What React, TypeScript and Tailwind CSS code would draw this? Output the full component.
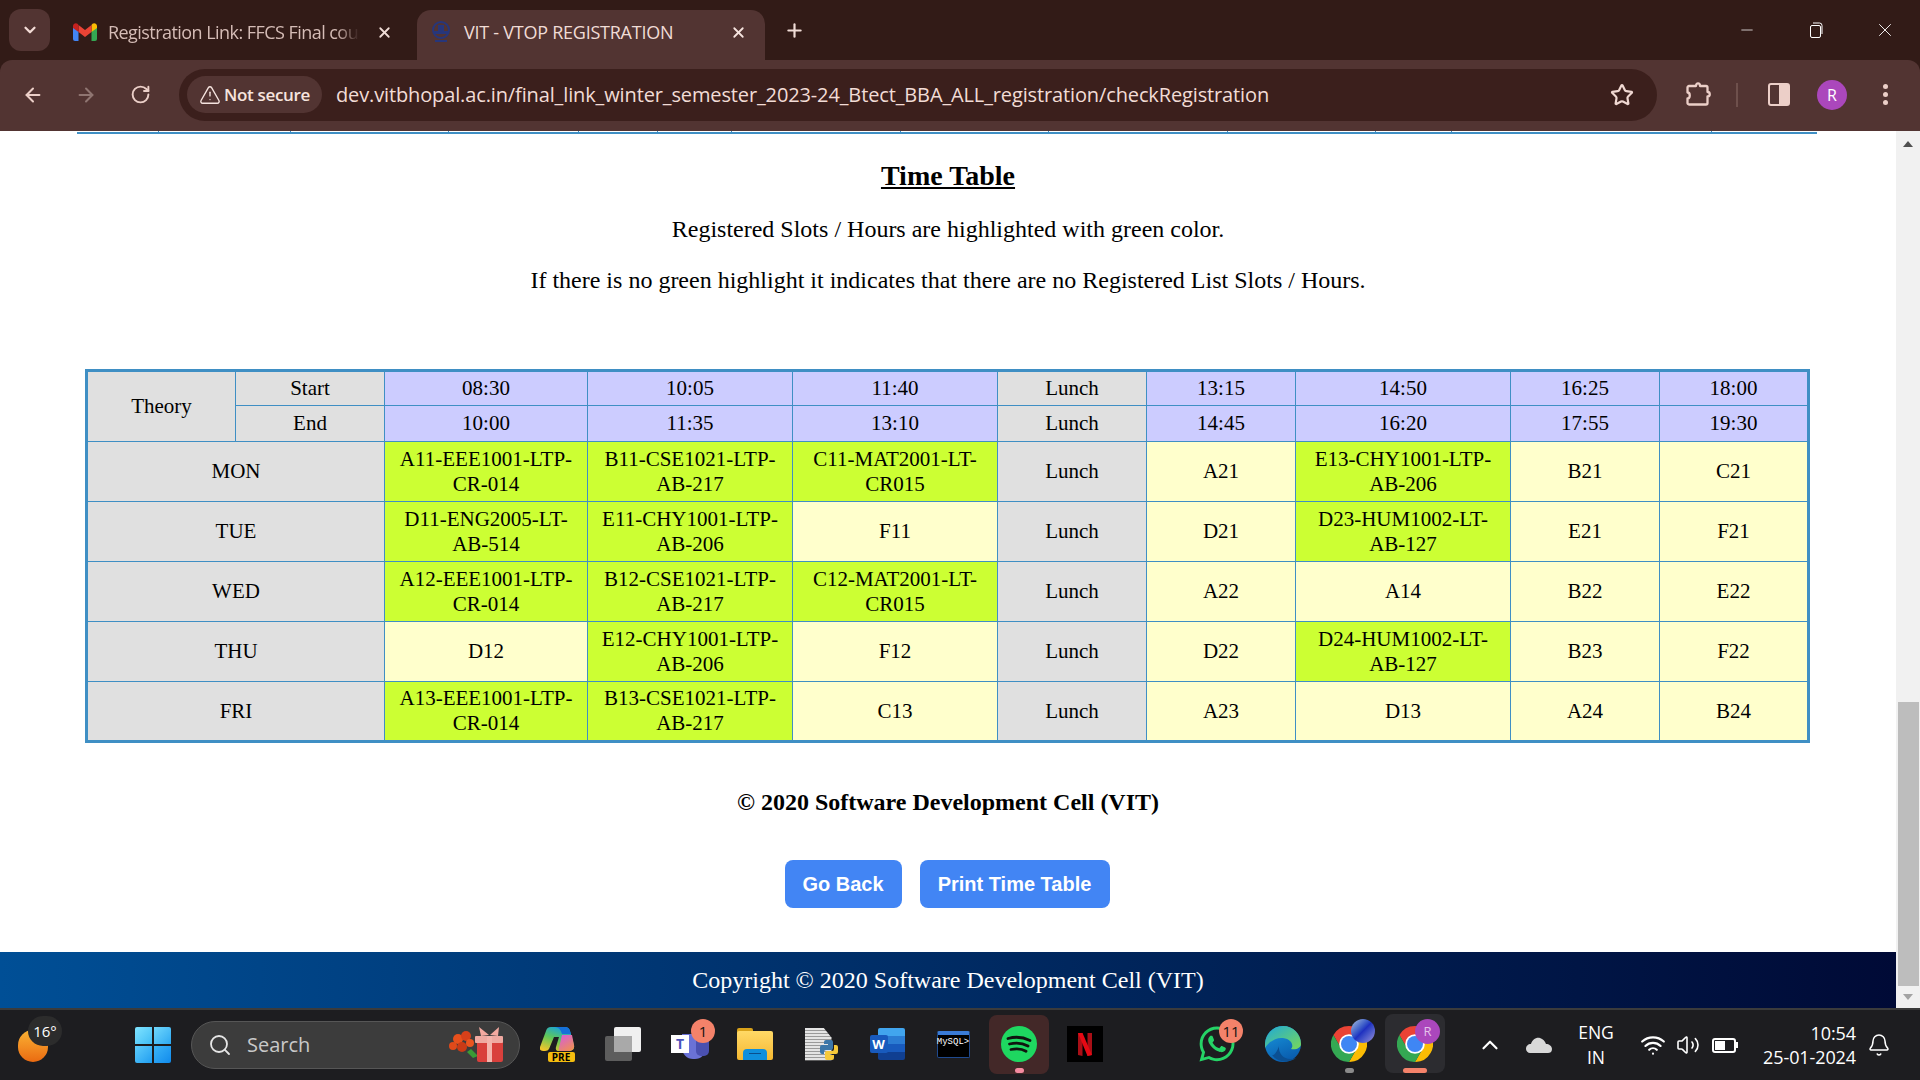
import React from "react";
import { FaWhatsapp } from "react-icons/fa";
import { ArrowLeft, ArrowRight, RotateCw, Star, X, Plus, ChevronDown, ChevronUp, TriangleAlert, Search, Wifi, Volume2, Bell, Minus } from "lucide-react";

const serif = "font-['Liberation_Serif',serif]";
const ui = "font-['Open_Sans',sans-serif]";

type Cell = { t: string; c: "g" | "y" | "l" };
const g = (t: string): Cell => ({ t, c: "g" });
const y = (t: string): Cell => ({ t, c: "y" });
const L: Cell = { t: "Lunch", c: "l" };

const rows: { d: string; cells: Cell[] }[] = [
  { d: "MON", cells: [g("A11-EEE1001-LTP-CR-014"), g("B11-CSE1021-LTP-AB-217"), g("C11-MAT2001-LT-CR015"), L, y("A21"), g("E13-CHY1001-LTP-AB-206"), y("B21"), y("C21")] },
  { d: "TUE", cells: [g("D11-ENG2005-LT-AB-514"), g("E11-CHY1001-LTP-AB-206"), y("F11"), L, y("D21"), g("D23-HUM1002-LT-AB-127"), y("E21"), y("F21")] },
  { d: "WED", cells: [g("A12-EEE1001-LTP-CR-014"), g("B12-CSE1021-LTP-AB-217"), g("C12-MAT2001-LT-CR015"), L, y("A22"), y("A14"), y("B22"), y("E22")] },
  { d: "THU", cells: [y("D12"), g("E12-CHY1001-LTP-AB-206"), y("F12"), L, y("D22"), g("D24-HUM1002-LT-AB-127"), y("B23"), y("F22")] },
  { d: "FRI", cells: [g("A13-EEE1001-LTP-CR-014"), g("B13-CSE1021-LTP-AB-217"), y("C13"), L, y("A23"), y("D13"), y("A24"), y("B24")] },
];
const starts = ["08:30", "10:05", "11:40", "Lunch", "13:15", "14:50", "16:25", "18:00"];
const ends = ["10:00", "11:35", "13:10", "Lunch", "14:45", "16:20", "17:55", "19:30"];
const td = "border border-[#3f8fc4] text-center align-middle px-[5px] py-0 leading-[25px] text-[21px]";
const bg = { g: "bg-[#ccff33]", y: "bg-[#ffffcc]", l: "bg-[#e0e0e0]" };

function Gmail() {
  return (
    <svg width="24" height="18" viewBox="0 0 24 18">
      <path d="M0 4v12a2 2 0 0 0 2 2h3.500V8z" fill="#4285f4" />
      <path d="M24 4v12a2 2 0 0 1-2 2h-3.500V8z" fill="#34a853" />
      <path d="M18.500 2v7L24 5V3c0-2.500-2.800-3.600-4.500-2.300z" fill="#fbbc04" />
      <path d="M5.500 9V2L12 7l6.500-5v7L12 14z" fill="#ea4335" />
      <path d="M0 3v2l5.500 4V2L4.500 .7C2.800-.6 0 .5 0 3z" fill="#c5221f" />
    </svg>
  );
}

const wedge = "M18 0a18 18 0 0 1 15.600 9H18a9 9 0 0 0-7.800 13.500L2.400 9A18 18 0 0 1 18 0z";
function ChromeLogo() {
  return (
    <svg width="36" height="36" viewBox="0 0 36 36">
      <path d={wedge} fill="#ea4335" />
      <path d={wedge} fill="#fbbc04" transform="rotate(120 18 18)" />
      <path d={wedge} fill="#34a853" transform="rotate(240 18 18)" />
      <circle cx="18" cy="18" r="9.800" fill="#fff" />
      <circle cx="18" cy="18" r="8" fill="#3f86f4" />
    </svg>
  );
}

function Badge({ t }: { t: string }) {
  return <span className={`absolute left-[35px] top-[5px] w-[24px] h-[24px] flex items-center justify-center rounded-full bg-[#f4826a] text-[#111] text-[15px] ${ui}`}>{t}</span>;
}

function Slot({ children }: { children: React.ReactNode }) {
  return <div className="relative w-[66px] h-[60px] flex items-center justify-center">{children}</div>;
}

export default function App() {
  return (
    <div className="w-[1920px] h-[1080px] flex flex-col overflow-hidden bg-white">
      {/* Tab strip */}
      <div className={`h-[60px] shrink-0 bg-[#321b17] flex items-start text-[#e8cfc9] ${ui}`}>
        <div className="ml-[9px] mt-[9px] w-[41px] h-[42px] rounded-[12px] bg-[#523432] flex items-center justify-center">
          <ChevronDown size={18} strokeWidth={3} color="#f3dcd6" />
        </div>
        <div className="w-[367px] h-[50px] mt-[10px] pb-[6px] flex items-center pl-[23px] relative">
          <Gmail />
          <span className="ml-[11px] w-[254px] whitespace-nowrap text-[18px] tracking-[-0.550px] text-[#d5bcb6] [mask-image:linear-gradient(90deg,#000_90%,transparent_99%)]">Registration Link: FFCS Final cou</span>
          <X size={17} strokeWidth={2.500} className="ml-[14px]" color="#f0dcd6" />
        </div>
        <div className="w-[348px] h-[50px] mt-[10px] pb-[6px] rounded-t-[14px] bg-[#523432] flex items-center pl-[14px]">
          <svg width="22" height="24" viewBox="0 0 22 24" className="ml-[-1px]">
            <circle cx="11" cy="10" r="8" fill="none" stroke="#27367a" strokeWidth="2" />
            <path d="M4 11h14v3H4zM8 5h6v6H8z" fill="#27367a" />
            <path d="M5 21h12" stroke="#27367a" strokeWidth="2" />
          </svg>
          <span className="ml-[12px] w-[266px] whitespace-nowrap text-[18px] tracking-[-0.250px] text-[#f0dcd6]">VIT - VTOP REGISTRATION</span>
          <X size={17} strokeWidth={2.500} color="#f6e4df" />
        </div>
        <Plus size={21} strokeWidth={2.500} color="#f0dcd6" className="ml-[19px] mt-[20px]" />
        <div className="flex-1" />
        <Minus size={18} strokeWidth={1} color="#fff" className="mt-[21px] mr-[53px]" />
        <svg width="14" height="16" viewBox="0 0 14 16" className="mt-[22px] mr-[51px]" fill="none" stroke="#fff" strokeWidth="1">
          <rect x="1.500" y="3.500" width="10" height="12" rx="1.500" />
          <path d="M4 1h6.500a2.500 2.500 0 0 1 2.500 2.500V12" />
        </svg>
        <X size={22} strokeWidth={1} color="#fff" className="mt-[19px] mr-[24px]" />
      </div>
      {/* Toolbar */}
      <div className={`h-[71px] shrink-0 bg-[#321b17] ${ui}`}>
        <div className="h-full pb-[2px] rounded-t-[12px] bg-[#523432] flex items-center text-[#f0d8d2]">
          <ArrowLeft size={22} strokeWidth={2.200} color="#eccfc8" className="ml-[22px]" />
          <ArrowRight size={22} strokeWidth={2.200} color="#8f7571" className="ml-[31px]" />
          <RotateCw size={21} strokeWidth={2.200} color="#eccfc8" className="ml-[33px]" />
          <div className="ml-[28px] w-[1478px] h-[52px] rounded-full bg-[#3b1f1c] flex items-center pl-[8px]">
            <div className="h-[37px] w-[135px] rounded-full bg-[#523432] flex items-center justify-center gap-[3px]">
              <TriangleAlert size={22} strokeWidth={1.500} color="#f6e4df" />
              <span className="text-[17px] font-semibold text-[#f6e4df] tracking-[-0.350px]">Not secure</span>
            </div>
            <span className="ml-[14px] text-[20px] tracking-[-0.130px] text-[#f2dcd6] whitespace-nowrap">dev.vitbhopal.ac.in/final_link_winter_semester_2023-24_Btect_BBA_ALL_registration/checkRegistration</span>
            <div className="flex-1" />
            <Star size={24} strokeWidth={2.200} color="#f0d8d2" className="mr-[23px]" />
          </div>
          <svg width="25" height="25" viewBox="0 0 25 25" fill="none" stroke="#eccfc8" strokeWidth="2.300" strokeLinejoin="round" className="ml-[29px]">
            <path d="M3 4h7c0-3.500 4-3.500 4 0h6a1.500 1.500 0 0 1 1.500 1.500V10c3 0 3 4.500 0 4.500V21a1.500 1.500 0 0 1-1.500 1.500H3A1.500 1.500 0 0 1 1.500 21v-4.500c3 0 3-6 0-6v-5A1.500 1.500 0 0 1 3 4z" />
          </svg>
          <div className="ml-[25px] w-[2px] h-[24px] bg-[#6e504c]" />
          <div className="ml-[30px] w-[22px] h-[23px] rounded-[3px] border-[2px] border-[#eccfc8] flex justify-end">
            <div className="w-[9px] h-full bg-[#eccfc8]" />
          </div>
          <div className="ml-[27px] w-[30px] h-[30px] rounded-full bg-[#ab47bc] flex items-center justify-center text-[16px] text-white">R</div>
          <div className="ml-[36px] flex flex-col gap-[3px]">
            <span className="w-[5px] h-[5px] rounded-full bg-[#eccfc8]" />
            <span className="w-[5px] h-[5px] rounded-full bg-[#eccfc8]" />
            <span className="w-[5px] h-[5px] rounded-full bg-[#eccfc8]" />
          </div>
        </div>
      </div>
      {/* Page */}
      <div className="h-[877px] shrink-0 flex">
        <div className={`w-[1896px] flex flex-col text-black ${serif}`}>
          <div className="mx-[77px] w-[1740px] h-[3px] border-b-[2px] border-[#3f8fc4] flex shrink-0">
            {[82, 132, 158, 130, 79, 74, 169, 148, 179, 148, 76, 260].map((w, i) => (
              <div key={i} className="h-full border-r border-[#3f8fc4]" style={{ width: w }} />
            ))}
          </div>
          <h1 className="mt-[25px] text-center text-[28px] leading-[34px] font-bold underline">Time Table</h1>
          <p className="mt-[23px] text-center text-[24px] leading-[26px]">Registered Slots / Hours are highlighted with green color.</p>
          <p className="mt-[25px] text-center text-[24px] leading-[26px]">If there is no green highlight it indicates that there are no Registered List Slots / Hours.</p>
          <table className="mt-[76px] ml-[85px] w-[1725px] table-fixed border-collapse border-[3px] border-[#3f8fc4] shrink-0">
            <colgroup>
              {[149, 149, 203, 205, 205, 149, 149, 215, 149, 149].map((w, i) => (
                <col key={i} style={{ width: w }} />
              ))}
            </colgroup>
            <tbody>
              <tr className="h-[35px]">
                <td rowSpan={2} className={`${td} bg-[#e0e0e0]`}>Theory</td>
                <td className={`${td} bg-[#e0e0e0]`}>Start</td>
                {starts.map((s, i) => (
                  <td key={i} className={`${td} ${s === "Lunch" ? "bg-[#e0e0e0]" : "bg-[#ccccff]"}`}>{s}</td>
                ))}
              </tr>
              <tr className="h-[36px]">
                <td className={`${td} bg-[#e0e0e0]`}>End</td>
                {ends.map((s, i) => (
                  <td key={i} className={`${td} ${s === "Lunch" ? "bg-[#e0e0e0]" : "bg-[#ccccff]"}`}>{s}</td>
                ))}
              </tr>
              {rows.map((r) => (
                <tr key={r.d} className="h-[60px]">
                  <td colSpan={2} className={`${td} bg-[#e0e0e0]`}>{r.d}</td>
                  {r.cells.map((c, i) => (
                    <td key={i} className={`${td} ${bg[c.c]}`}>{c.t}</td>
                  ))}
                </tr>
              ))}
            </tbody>
          </table>
          <p className="mt-[45px] text-center text-[24px] leading-[28px] font-bold">© 2020 Software Development Cell (VIT)</p>
          <div className="mt-[44px] mr-[2px] flex justify-center gap-[18px] font-['Liberation_Sans',sans-serif] text-[20px] font-bold text-white">
            <button className="w-[117px] h-[48px] rounded-[8px] bg-[#4285f4]">Go Back</button>
            <button className="w-[190px] h-[48px] rounded-[8px] bg-[#4285f4]">Print Time Table</button>
          </div>
          <div className="flex-1" />
          <div className="h-[56px] bg-gradient-to-r from-[#004f96] to-[#000a36] flex items-center justify-center text-white text-[24px]">Copyright © 2020 Software Development Cell (VIT)</div>
        </div>
        <div className="w-[24px] bg-[#f1f1f1] flex flex-col items-center">
          <div className="h-[26px] flex items-center justify-center">
            <div className="w-0 h-0 border-x-[5px] border-x-transparent border-b-[6px] border-b-[#505050]" />
          </div>
          <div className="h-[545px]" />
          <div className="w-[21px] h-[284px] bg-[#bdbdbd]" />
          <div className="flex-1 flex items-center justify-center">
            <div className="w-0 h-0 border-x-[5px] border-x-transparent border-t-[6px] border-t-[#a3a3a3]" />
          </div>
        </div>
      </div>
      {/* Taskbar */}
      <div className={`h-[72px] shrink-0 bg-[#1d1d20] border-t-[2px] border-[#3b3b3b] flex items-center text-white ${ui}`}>
        <div className="relative ml-[18px] w-[30px] h-[34px] mt-[4px]">
          <div className="w-[30px] h-[32px] rounded-full bg-gradient-to-b from-[#f9b233] to-[#ea6a10]" />
          <span className="absolute left-[10px] top-[-14px] w-[34px] h-[30px] rounded-full bg-[#2c2c2c] flex items-center justify-center text-[15px]">16°</span>
        </div>
        <div className="ml-[87px] grid grid-cols-2 gap-[2px] w-[36px] h-[36px]">
          <span className="bg-gradient-to-br from-[#7fe4ff] to-[#3dbcf5] rounded-tl-[2px]" />
          <span className="bg-gradient-to-br from-[#6fd8fc] to-[#2aa8f2] rounded-tr-[2px]" />
          <span className="bg-gradient-to-br from-[#5ccdfb] to-[#1d9df0] rounded-bl-[2px]" />
          <span className="bg-gradient-to-br from-[#3ab5f8] to-[#0f8aec] rounded-br-[2px]" />
        </div>
        <div className="ml-[20px] w-[329px] h-[48px] rounded-full bg-[#3c3c3c] border border-[#565656] flex items-center pl-[16px]">
          <Search size={24} strokeWidth={1.800} color="#e6e6e6" />
          <span className="ml-[15px] text-[20px] text-[#c9c9c9]">Search</span>
          <div className="flex-1" />
          <svg width="60" height="42" viewBox="0 0 60 42" className="mr-[14px]">
            <path d="M28 34l-6-6 4-3 7 7z" fill="#3a9a35" />
            <circle cx="8" cy="22" r="4" fill="#e04a1a" />
            <circle cx="13" cy="15" r="5" fill="#e8501c" />
            <circle cx="21" cy="12" r="5" fill="#d8401a" />
            <circle cx="17" cy="23" r="5" fill="#c93a16" />
            <circle cx="25" cy="19" r="4" fill="#ea5520" />
            <rect x="32" y="14" width="26" height="24" rx="2" fill="#d9403c" />
            <rect x="30" y="12" width="28" height="7" rx="1" fill="#efa9a1" />
            <rect x="42" y="12" width="5" height="26" fill="#f4b3ab" />
            <path d="M44 11L34 3l2 9zM45 11l9-8-1 9z" fill="#f4a9a0" />
          </svg>
        </div>
        {/* pinned apps */}
        <div className="ml-[4px] mb-[2px] flex items-center">
          <Slot>
            <div className="relative w-[35px] h-[34px]">
              <svg width="35" height="25" viewBox="0 0 35 25" className="absolute left-0 top-0">
                <defs>
                  <linearGradient id="cpl" x1="0.700" y1="0" x2="0.200" y2="1">
                    <stop offset="0" stopColor="#12a0e8" />
                    <stop offset="0.500" stopColor="#5fc85a" />
                    <stop offset="1" stopColor="#f4c52a" />
                  </linearGradient>
                  <linearGradient id="cpr" x1="0.200" y1="0" x2="0.800" y2="1">
                    <stop offset="0" stopColor="#d65fd6" />
                    <stop offset="1" stopColor="#f09050" />
                  </linearGradient>
                </defs>
                <path d="M11 0h14q4 0 5 4l4 14q1 5-4 6H19q-4 0-3-4l3-10H14L9 22q-1 2-4 2H3q-4 0-3-4L6 4q1-4 5-4z" fill="url(#cpl)" />
                <path d="M15 0h10q4 0 5 4l1 3H22q-2-7-7-7z" fill="#1670d8" />
                <path d="M22 8h10l2 10q1 5-4 6h-9q-3 0-2-3z" fill="url(#cpr)" />
              </svg>
              <span className="absolute left-[8px] top-[25px] w-[27px] h-[10px] rounded-[2px] bg-[#f5bd0f] text-black text-[10px] font-bold leading-[10px] text-center">PRE</span>
            </div>
          </Slot>
          <Slot>
            <div className="relative w-[36px] h-[34px]">
              <div className="absolute left-0 top-[9px] w-[27px] h-[25px] rounded-[2px] bg-[#5d5d5d]" />
              <div className="absolute left-[9px] top-0 w-[27px] h-[25px] rounded-[2px] bg-[#f0f0f0]" />
              <div className="absolute left-[9px] top-[9px] w-[18px] h-[16px] bg-[#a9a9a9]" />
            </div>
          </Slot>
          <Slot>
            <div className="absolute left-[26px] top-[20px] w-[24px] h-[25px] rounded-b-[11px] bg-[#6a72d6]" />
            <div className="absolute left-[40px] top-[22px] w-[13px] h-[20px] rounded-[5px] bg-[#4a50b0]" />
            <div className="absolute left-[15px] top-[21px] w-[18px] h-[18px] bg-white text-[#4b53bc] text-[14px] font-bold leading-[18px] text-center">T</div>
            <Badge t="1" />
          </Slot>
          <Slot>
            <div className="relative w-[36px] h-[32px]">
              <div className="absolute left-0 top-0 w-[16px] h-[8px] rounded-t-[2px] bg-[#d9a21a]" />
              <div className="absolute left-0 top-[3px] w-[36px] h-[29px] rounded-[2px] bg-gradient-to-b from-[#ffd966] to-[#f5b82e]" />
              <div className="absolute left-[6px] top-[21px] w-[24px] h-[11px] rounded-t-[4px] bg-[#0f8fdc]" />
              <div className="absolute left-[12px] top-[25px] w-[12px] h-[1px] bg-[#0a4f8c]" />
            </div>
          </Slot>
          <Slot>
            <div className="relative w-[33px] h-[33px]">
              <div className="absolute left-0 top-0 w-[27px] h-[33px] bg-[repeating-linear-gradient(180deg,#e4e4e4_0px,#e4e4e4_2px,#9a9a9a_2px,#9a9a9a_3px)] [clip-path:polygon(0_0,70%_0,100%_30%,100%_100%,0_100%)]" />
              <svg width="18" height="22" viewBox="0 0 18 22" className="absolute left-[15px] top-[11px]">
                <path d="M6 1h5a2 2 0 0 1 2 2v6a2 2 0 0 1-2 2H6a2 2 0 0 0-2 2v2H2a2 2 0 0 1-2-2V8a2 2 0 0 1 2-2h6V5H4V3a2 2 0 0 1 2-2z" fill="#3c76a8" />
                <path d="M14 6h2a2 2 0 0 1 2 2v5a2 2 0 0 1-2 2h-6v1h4v3a2 2 0 0 1-2 2H7a2 2 0 0 1-2-2v-5a2 2 0 0 1 2-2h5a2 2 0 0 0 2-2z" fill="#f6c93a" />
              </svg>
            </div>
          </Slot>
          <Slot>
            <div className="relative w-[35px] h-[32px]">
              <div className="absolute right-0 top-0 w-[27px] h-[32px] rounded-[2px] overflow-hidden flex flex-col">
                <span className="flex-1 bg-[#41a5ee]" />
                <span className="flex-1 bg-[#2b7cd3]" />
                <span className="flex-1 bg-[#185abd]" />
                <span className="flex-1 bg-[#103f91]" />
              </div>
              <div className="absolute left-0 top-[7px] w-[18px] h-[18px] rounded-[2px] bg-[#185abd] text-white text-[13px] font-bold leading-[18px] text-center">W</div>
            </div>
          </Slot>
          <Slot>
            <div className="w-[33px] h-[27px] rounded-[2px] bg-black border-[1px] border-[#1f4a8f] border-t-[4px] border-t-[#3a7bd5] flex items-start pt-[2px] justify-center text-[9px] leading-[10px] text-white font-['Liberation_Mono',monospace]">MySQL&gt;</div>
          </Slot>
          <Slot>
            <div className="w-[60px] h-[59px] rounded-[8px] bg-[#432828] flex items-center justify-center">
              <svg width="36" height="36" viewBox="0 0 36 36">
                <circle cx="18" cy="18" r="18" fill="#1ed760" />
                <path d="M7 12.500c7-2 15-1.500 22 2M8.500 18c6-1.500 13-1 18.500 2M10 23.500c5-1 11-.7 15 1.700" fill="none" stroke="#10140f" strokeWidth="2.800" strokeLinecap="round" />
              </svg>
            </div>
            <span className="absolute bottom-[1px] left-[29px] w-[9px] h-[5px] rounded-full bg-[#f48ba0]" />
          </Slot>
          <Slot>
            <div className="w-[36px] h-[36px] bg-black flex items-center justify-center">
              <svg width="14" height="23" viewBox="0 0 14 23">
                <path d="M0 0h4.500v23L0 22z" fill="#a80f16" />
                <path d="M9.500 0H14v22l-4.500 1z" fill="#a80f16" />
                <path d="M0 0h4.500L14 22l-4.500 1z" fill="#e50914" />
              </svg>
            </div>
          </Slot>
          <div className="w-[66px]" />
          <Slot>
            <FaWhatsapp size={40} color="#25d366" />
            <Badge t="11" />
          </Slot>
          <Slot>
            <svg width="36" height="36" viewBox="0 0 36 36">
              <defs>
                <linearGradient id="edb" x1="0" y1="0" x2="0.400" y2="1">
                  <stop offset="0" stopColor="#1a9be0" />
                  <stop offset="1" stopColor="#0a5fb0" />
                </linearGradient>
                <linearGradient id="edg" x1="0" y1="0" x2="1" y2="1">
                  <stop offset="0" stopColor="#1fa9d8" />
                  <stop offset="1" stopColor="#78d858" />
                </linearGradient>
              </defs>
              <circle cx="18" cy="18" r="18" fill="url(#edb)" />
              <path d="M14 20c-1 8 6 16 17 12-6 5-18 5-24-3 2 1 5-3 7-9z" fill="#0b4f92" />
              <path d="M18 0c10 0 18 8 18 18 0 4-5 6-10 5 3-3 1-10-8-11C10 11 3 17 0 22-1 10 7 0 18 0z" fill="url(#edg)" />
            </svg>
          </Slot>
          <Slot>
            <ChromeLogo />
            <span className="absolute left-[35px] top-[5px] w-[24px] h-[24px] rounded-full bg-gradient-to-br from-[#b8c4d8] via-[#2030c0] to-[#a090d8]" />
            <span className="absolute bottom-[1px] left-[29px] w-[9px] h-[5px] rounded-full bg-[#8a8a8a]" />
          </Slot>
          <Slot>
            <div className="absolute left-[3px] top-0 w-[60px] h-[59px] rounded-[8px] bg-[#2c2c30]" />
            <div className="relative flex"><ChromeLogo /></div>
            <span className="absolute left-[33px] top-[5px] w-[25px] h-[25px] rounded-full bg-[#ab47bc] flex items-center justify-center text-[13px] text-[#e5c3ea]">R</span>
            <span className="absolute bottom-[1px] left-[21px] w-[24px] h-[5px] rounded-full bg-[#f4826a]" />
          </Slot>
        </div>
        <ChevronUp size={26} strokeWidth={2} color="#fff" className="ml-[29px]" />
        <svg width="26" height="16" viewBox="0 0 26 16" className="ml-[23px]">
          <path d="M0 12c0-3 2-5 5-5 1-4 5-7 9-6 3 1 5 3 6 6 3 0 6 2 6 5s-2 4-4 4H4c-2 0-4-2-4-4z" fill="#d8d8d8" />
        </svg>
        <div className="ml-[21px] w-[46px] text-center text-[17.500px] leading-[25px]">ENG<br />IN</div>
        <Wifi size={26} strokeWidth={2} color="#fff" className="ml-[21px]" />
        <Volume2 size={24} strokeWidth={1.600} color="#fff" className="ml-[10px]" />
        <div className="ml-[12px] w-[24px] h-[15px] rounded-[3px] border-[2px] border-white flex items-center p-[1px]">
          <div className="w-[10px] h-full bg-white" />
        </div>
        <div className="w-[2px] h-[6px] bg-white" />
        <div className="w-[118px] text-right text-[18px] leading-[24px] tracking-[-0.100px]">10:54<br />25-01-2024</div>
        <Bell size={24} strokeWidth={1.500} color="#fff" className="ml-[11px]" />
      </div>
    </div>
  );
}
